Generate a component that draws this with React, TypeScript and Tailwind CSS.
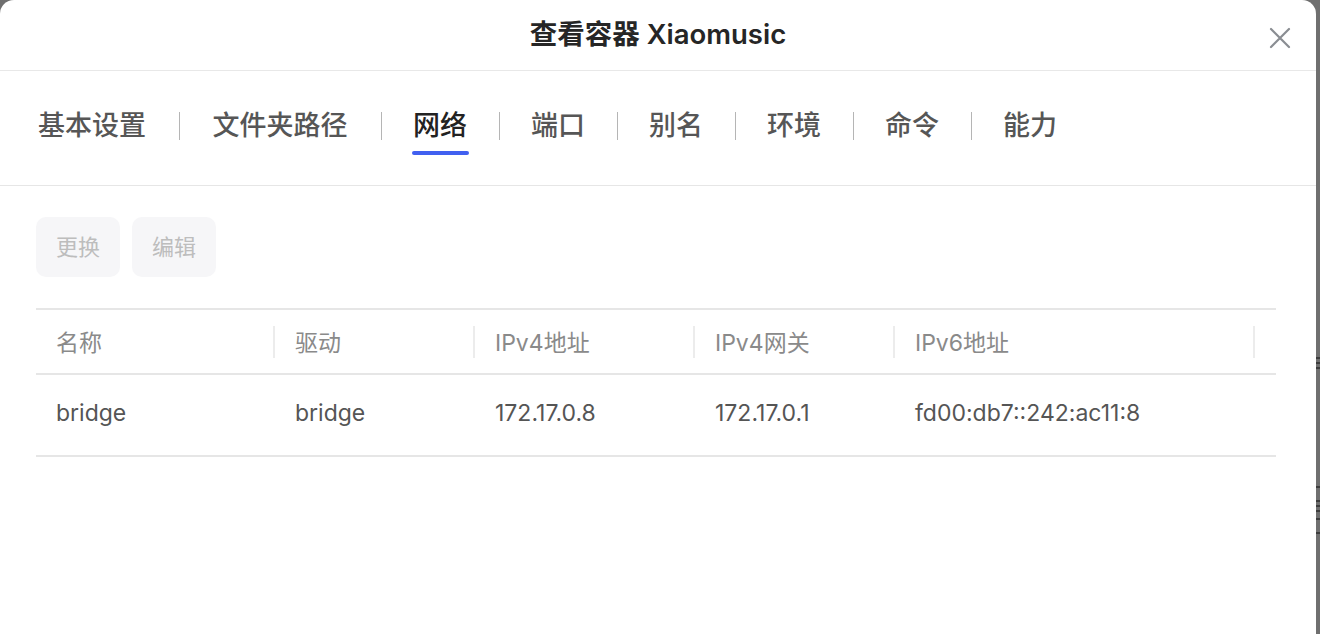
import React from "react";

const font = { fontFamily: "Inter, 'Noto Sans CJK SC', sans-serif" };

const tabs = [
  { t: "基本设置", w: "w-[110px]" },
  { t: "文件夹路径", w: "w-[138px]" },
  { t: "网络", w: "w-[54px]" },
  { t: "端口", w: "w-[54px]" },
  { t: "别名", w: "w-[54px]" },
  { t: "环境", w: "w-[54px]" },
  { t: "命令", w: "w-[54px]" },
  { t: "能力", w: "w-[54px]" },
];
const cols = [
  { w: "w-[239px]", h: "名称", v: "bridge", sep: true },
  { w: "w-[200px]", h: "驱动", v: "bridge", sep: true },
  { w: "w-[220px]", h: "IPv4地址", v: "172.17.0.8", sep: true },
  { w: "w-[200px]", h: "IPv4网关", v: "172.17.0.1", sep: true },
  { w: "w-[360px]", h: "IPv6地址", v: "fd00:db7::242:ac11:8", sep: true },
  { w: "w-[21px]", h: "", v: "", sep: false },
];

export default function App() {
  return (
    <div className="flex h-[634px] w-[1320px] overflow-hidden bg-[#6f6f6f]" style={font}>
      <div className="flex h-[634px] w-[1316px] flex-col rounded-t-[14px] bg-white">
        {/* Header */}
        <div className="grid h-[71px] grid-cols-[1fr_auto_1fr] items-center border-b border-[#e8e8e8]">
          <div />
          <div className="pb-[2px] text-[27.5px] font-semibold leading-[30px] whitespace-nowrap text-[#262626]">
            查看容器 Xiaomusic
          </div>
          <div className="flex justify-end pr-[24px] pt-[6px]">
            <svg width="24" height="24" viewBox="0 0 24 24" fill="none">
              <path d="M3 3L21 21M21 3L3 21" stroke="#8a8d92" strokeWidth="2.2" strokeLinecap="round" />
            </svg>
          </div>
        </div>

        {/* Tabs */}
        <div className="flex items-start border-b border-[#e6e6e6] pl-[37px] pt-[41px] pb-[30px]">
          {tabs.map((tab, i) => (
            <React.Fragment key={tab.t}>
              {i > 0 && <div className="ml-[32px] mr-[31px] h-[28px] w-px bg-[#b5b5b5]" />}
              <div className={"flex flex-col items-center " + tab.w}>
                <div
                  className={
                    "h-[28px] text-[27px] font-medium leading-[28px] whitespace-nowrap " +
                    (tab.t === "网络" ? "text-[#222222]" : "text-[#565656]")
                  }
                >
                  {tab.t}
                </div>
                <div
                  className={
                    "mt-[11px] h-[4px] w-[57px] rounded-full " +
                    (tab.t === "网络" ? "bg-[#4160f0]" : "bg-transparent")
                  }
                />
              </div>
            </React.Fragment>
          ))}
        </div>

        {/* Content */}
        <div className="flex flex-col pl-[36px] pr-[40px] pt-[31px]">
          <div className="flex gap-[12px]">
            <div className="flex h-[60px] w-[84px] items-center justify-center rounded-[10px] bg-[#f6f6f8] text-[22px] text-[#bdbdbd]">
              更换
            </div>
            <div className="flex h-[60px] w-[84px] items-center justify-center rounded-[10px] bg-[#f6f6f8] text-[22px] text-[#bdbdbd]">
              编辑
            </div>
          </div>

          <div className="mt-[31px] flex w-[1240px] flex-col border-t-2 border-[#e6e6e6]">
            <div className="flex h-[65px] items-center border-b-2 border-[#e6e6e6]">
              {cols.map((c, i) => (
                <div key={i} className={"flex h-full items-center " + c.w}>
                  <div className="flex-1 pl-[20px] pt-[3px] text-[23px] text-[#8a8a8a]">{c.h}</div>
                  {c.sep && <div className="h-[32px] w-[2px] bg-[#ececec]" />}
                </div>
              ))}
            </div>
            <div className="flex h-[82px] items-center border-b-2 border-[#e6e6e6] pb-[3px]">
              {cols.map((c, i) => (
                <div key={i} className={"pl-[20px] text-[23px] text-[#555555] " + c.w}>
                  {c.v}
                </div>
              ))}
            </div>
          </div>
        </div>
      </div>
      <div className="flex w-[4px] flex-col">
        <div className="h-[357px]" />
        <div className="h-[2px] bg-[#3d3d3d]" />
        <div className="h-[3px]" />
        <div className="h-[2px] bg-[#3d3d3d]" />
        <div className="h-[3px]" />
        <div className="h-[2px] bg-[#3d3d3d]" />
        <div className="h-[117px]" />
        <div className="h-[2px] bg-[#3d3d3d]" />
        <div className="h-[12px]" />
        <div className="h-[2px] bg-[#3d3d3d]" />
        <div className="h-[3px]" />
        <div className="h-[2px] bg-[#3d3d3d]" />
        <div className="h-[3px]" />
        <div className="h-[2px] bg-[#3d3d3d]" />
        <div className="h-[6px]" />
        <div className="h-[2px] bg-[#3d3d3d]" />
        <div className="h-[12px]" />
        <div className="h-[2px] bg-[#3d3d3d]" />
      </div>
    </div>
  );
}
